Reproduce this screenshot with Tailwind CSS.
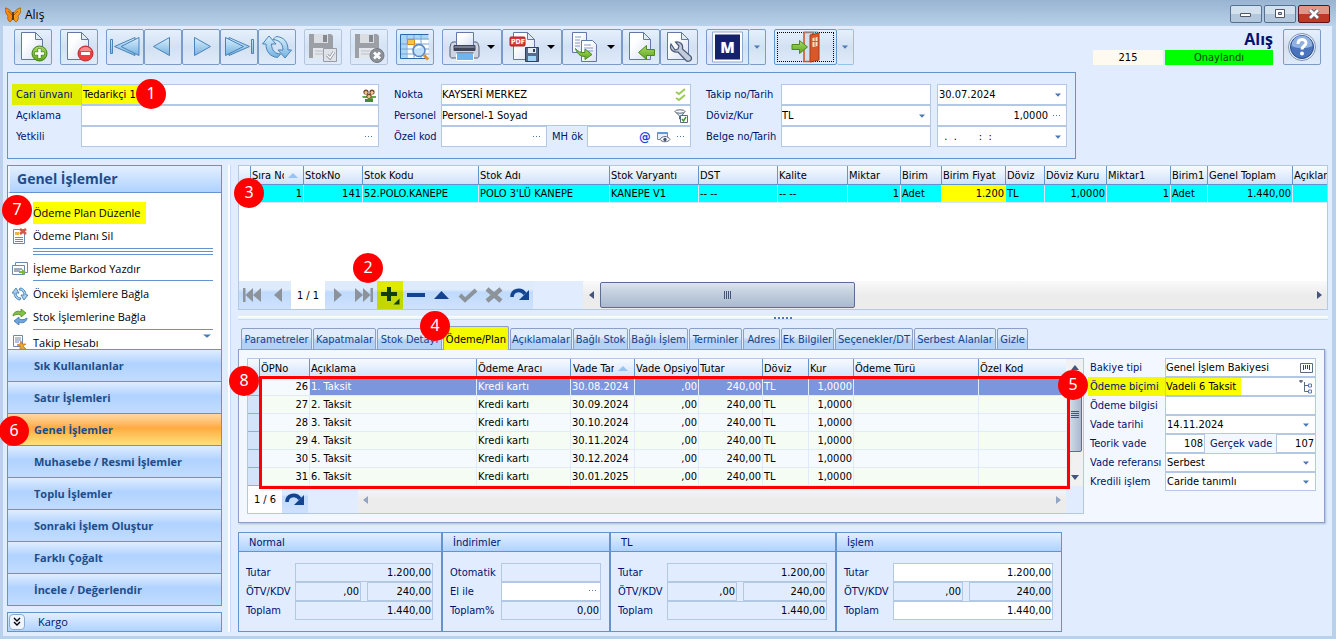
<!DOCTYPE html>
<html lang="tr">
<head>
    <meta charset="UTF-8">
    <meta name="viewport" content="width=device-width, initial-scale=1.0">
    <title>Alış</title>
    <script src="https://cdn.jsdelivr.net/npm/@tailwindcss/browser@4"></script>
</head>
<body class="relative min-h-screen flex flex-col bg-[#b9d1ea] font-['DejaVu_Sans_Condensed','Noto_Sans',sans-serif] text-[11px] leading-4 text-black">

    <!-- shared glyphs -->
    <svg class="absolute w-0 h-0">
        <defs>
            <linearGradient id="blue" x1="0" y1="0" x2="0" y2="1"><stop offset="0" stop-color="#d9effc"/><stop offset="1" stop-color="#74b2e0"/></linearGradient>
            <linearGradient id="green" x1="0" y1="0" x2="0" y2="1"><stop offset="0" stop-color="#a9dc62"/><stop offset="1" stop-color="#5da320"/></linearGradient>
            <linearGradient id="sheet" x1="0" y1="0" x2="1" y2="1"><stop offset=".3" stop-color="#fff"/><stop offset="1" stop-color="#d5def2"/></linearGradient>
        </defs>
        <symbol id="caret" viewBox="0 0 6 4"><path d="M0 0.5h6L3 3.8z" fill="#4a79b5"/></symbol>
        <symbol id="caret-black" viewBox="0 0 8 4"><path d="M0 0h8L4 4z" fill="#000"/></symbol>
        <symbol id="dots" viewBox="0 0 8 2"><path d="M0 0h1v1H0zM3 0h1v1H3zM6 0h1v1H6z" fill="#4a79b5"/></symbol>
        <symbol id="sort" viewBox="0 0 10 5"><path d="M0 5h10L5 0z" fill="#99c2f5"/></symbol>
        <symbol id="redo" viewBox="0 0 20 14"><path d="M2 9C2 2 11 0 15 6" fill="none" stroke="#13448f" stroke-width="3.6"/><path d="M19 2v10H9z" fill="#13448f"/></symbol>
        <symbol id="page" viewBox="0 0 32 32"><path d="M4.500 1.500h14l7 7v20h-21z" fill="url(#sheet)" stroke="#6478a8"/><path d="M18.500 1.500v7h7z" fill="#e3e9f6" stroke="#6478a8"/></symbol>
        <symbol id="disk" viewBox="0 0 32 32"><path d="M2 3h22l2 2v22H2z" fill="#8b8d91"/><path d="M7 3h14v9H7z" fill="#d9dbdd"/><path d="M16 4h4v7h-4z" fill="#6e7074"/><path d="M6 17h17v10H6z" fill="#e4e6e8"/><path d="M8 20h13M8 23h13" stroke="#b3b5b9"/></symbol>
    </svg>

    <header class="h-[26px] flex items-center pl-[5px] pr-1.5 bg-linear-to-b from-[#99b4d1] to-[#b9d1ea]">
        <svg class="w-4 h-4 mt-1" viewBox="0 0 16 16">
            <path d="M8 8C6 3 3 1 0 1c0 4 1 6 3 8-1 2 0 5 2 6 2-1 3-4 3-7z" fill="#f08a10" stroke="#8a4508" stroke-width=".6"/>
            <path d="M8 8c2-5 5-7 8-7 0 4-1 6-3 8 1 2 0 5-2 6-2-1-3-4-3-7z" fill="#f59a1c" stroke="#8a4508" stroke-width=".6"/>
            <path d="M3 4l4 4M13 4L9 8" stroke="#b35f0c"/>
            <path d="M8 5v8" stroke="#3c1d05" stroke-width="1.400"/>
        </svg>
        <h1 class="ml-1 mt-1 font-['Open_Sans',sans-serif] text-xs">Alış</h1>
        <div class="ml-auto flex gap-0.5 mt-0.5">
            <button aria-label="Küçült" class="w-8 h-[18px] flex items-center justify-center rounded-xs border border-[#56708f] bg-linear-to-b from-[#d3e0ee] from-50% to-[#b3c7dd] to-50%">
                <svg class="w-3 h-2" viewBox="0 0 12 8"><path d="M.5 3.500h10v3H.5z" fill="#fff" stroke="#535666"/></svg>
            </button>
            <button aria-label="Büyüt" class="w-8 h-[18px] flex items-center justify-center rounded-xs border border-[#56708f] bg-linear-to-b from-[#d3e0ee] from-50% to-[#b3c7dd] to-50%">
                <svg class="w-3 h-2.5" viewBox="0 0 12 10"><path d="M1.500.5h9v8h-9z" fill="#fff" stroke="#535666"/><path d="M4.500 3.500h3v2h-3z" fill="#b3c7dd" stroke="#535666"/></svg>
            </button>
            <button aria-label="Kapat" class="w-8 h-[18px] flex items-center justify-center rounded-xs border border-[#5c1520] bg-linear-to-b from-[#e0978a] from-50% to-[#bf3a26] to-50%">
                <svg class="w-3 h-2.5" viewBox="0 0 12 10"><path d="M2 1l8 8M10 1L2 9" stroke="#535666" stroke-width="4.500"/><path d="M2 1l8 8M10 1L2 9" stroke="#fff" stroke-width="2.800"/></svg>
            </button>
        </div>
    </header>

    <div class="grow mx-[3px] mb-[3px] mr-1 flex flex-col bg-[#e1edff] pb-1">

        <!-- toolbar -->
        <div class="flex pt-[3px] px-[11px] [&_button]:h-9 [&_button]:flex [&_button]:items-center [&_button]:justify-center [&_button]:border [&_button]:border-[#7a9cc6] [&_button]:rounded-xs [&_button]:bg-linear-to-b [&_button]:from-[#e6f0fc] [&_button]:via-[#d2e1f3] [&_button]:to-[#dfebf9] [&_button>svg]:h-8">
            <button aria-label="Yeni" class="w-[38px]">
                <svg class="w-8" viewBox="0 0 32 32"><use href="#page"/><circle cx="22.500" cy="22.500" r="7.500" fill="url(#green)" stroke="#3f7f16"/><path d="M22.500 17.500v10M17.500 22.500h10" stroke="#4d8a1c" stroke-width="4"/><path d="M22.500 18v9M18 22.500h9" stroke="#fff" stroke-width="2.600"/></svg>
            </button>
            <button aria-label="Sil" class="w-[38px] ml-2">
                <svg class="w-8" viewBox="0 0 32 32"><use href="#page"/><circle cx="22.500" cy="22.500" r="7.500" fill="#f03e3e" stroke="#b92c2c"/><path d="M16.500 20a6.500 6.500 0 0112 0z" fill="#fa8d8d"/><path d="M18 22.500h9" stroke="#fff" stroke-width="3"/></svg>
            </button>
            <div class="flex ml-2 [&_path]:fill-[url(#blue)] [&_path]:stroke-[#4a83b8]">
                <button aria-label="İlk" class="w-[38px]"><svg class="w-8" viewBox="0 0 32 32"><path d="M1.500 8.500h2v14h-2zM26 6.500v18L5.500 15.500z"/><path d="M30 6.500v18L12 15.500z"/></svg></button>
                <button aria-label="Önceki" class="w-[38px]"><svg class="w-8" viewBox="0 0 32 32"><path d="M22.500 6.500v18L6.500 15.500z"/></svg></button>
                <button aria-label="Sonraki" class="w-[38px]"><svg class="w-8" viewBox="0 0 32 32"><path d="M9.500 6.500v18l16-9z"/></svg></button>
                <button aria-label="Son" class="w-[38px]"><svg class="w-8" viewBox="0 0 32 32"><path d="M6 6.500v18l20.500-9zM28.500 8.500h2v14h-2z"/><path d="M2.500 6.500v18l18-9z"/></svg></button>
                <button aria-label="Yenile" class="w-[38px]"><svg class="w-8" viewBox="0 0 32 32"><path d="M8 5l-6.500 8H5c0 8 4 12.500 11.500 13.500l3-3.500c-5 0-9-3.500-9-10H15z"/><path d="M24 27l6.500-8H27c0-8-4-13-12-13.500L12 8.500c6 .5 10 4 10 10.500h-5z"/></svg></button>
            </div>
            <button aria-label="Kaydet" class="w-[38px] ml-2 opacity-80 border-[#a9bcd6]!">
                <svg class="w-8" viewBox="0 0 32 32"><use href="#disk"/><path d="M16.500 17.500h13v13h-13z" fill="#dfe1e4" stroke="#85878c"/><path d="M20 24l3 3 4-6" fill="none" stroke="#77797d" stroke-width="3"/><path d="M20 24l3 3 4-6" fill="none" stroke="#fff" stroke-width="1.400"/></svg>
            </button>
            <button aria-label="Kaydet ve kapat" class="w-[38px] ml-2 opacity-80 border-[#a9bcd6]!">
                <svg class="w-8" viewBox="0 0 32 32"><use href="#disk"/><circle cx="24" cy="24.500" r="7" fill="#77797d" stroke="#5e6064"/><path d="M21 21.500l6 6M27 21.500l-6 6" stroke="#fff" stroke-width="2.800"/></svg>
            </button>
            <button aria-label="Listele" class="w-[38px] ml-2">
                <svg class="w-8" viewBox="0 0 32 32"><path d="M1.500 3.500h28v24h-28z" fill="#fff"/><path d="M1.500 3.500h28v5h-22v19h-6z" fill="#a8d7f5"/><path d="M8 8h22M8 13h22M8 18h22M8 23h22M8 3v25M15 3v25M22 3v25M2 13h6M2 18h6M2 23h6" stroke="#7aa5d3"/><path d="M29.500 3.500h-28v24h28" fill="none" stroke="#2e66a8"/><path d="M8.500 8.500h7v5h-7z" fill="#fcc34c" stroke="#d98b12"/><path d="M25 24l4 4.500" stroke="#d9923a" stroke-width="3"/><circle cx="20" cy="19.500" r="6" fill="#bfe0f8" stroke="#5a86c2" stroke-width="1.600"/><path d="M16 18a4.500 4.500 0 017-2z" fill="#fff"/></svg>
            </button>

            <button aria-label="Yazdır" class="w-[60px] gap-1.5 ml-2">
                <svg class="w-8" viewBox="0 0 32 32"><path d="M4 11h23c2 0 2 2 3 5v9c0 1-1 2-2 2H3c-1 0-2-1-2-2v-9c1-3 1-5 3-5z" fill="#cfd4e2" stroke="#565e76"/><path d="M7.500 1.500h17v13h-17z" fill="url(#sheet)" stroke="#6478a8"/><path d="M5 14.500h21v5H5z" fill="#767d90" stroke="#3e4456"/><path d="M5 17h21v3H5z" fill="#3e4456"/><path d="M7.500 22.500h17v7h-17z" fill="#6fb4ee" stroke="#fff"/><path d="M7.500 22h17" stroke="#3e4456"/></svg>
                <svg class="w-2 h-1!" viewBox="0 0 8 4"><use href="#caret-black"/></svg>
            </button>
            <button aria-label="PDF kaydet" class="w-[60px] gap-1.5">
                <svg class="w-8" viewBox="0 0 32 32"><use href="#page"/><rect x="1" y="6" width="15" height="9" rx="1" fill="#d83a3a" stroke="#b01f1f"/><text x="2" y="13" font-size="7" font-weight="bold" fill="#fff" font-family="DejaVu Sans Condensed">PDF</text><path d="M16.500 16.500h13v14h-13z" fill="#566a8e" stroke="#2f3f5e"/><path d="M19 17h8v5h-8z" fill="#e6ecf5"/><path d="M24 18h2v3h-2z" fill="#2f3f5e"/><path d="M19 25h8v5h-8z" fill="#9fd3f7"/></svg>
                <svg class="w-2 h-1!" viewBox="0 0 8 4"><use href="#caret-black"/></svg>
            </button>
            <button aria-label="Kopyala" class="w-[60px] gap-1.5">
                <svg class="w-8" viewBox="0 0 32 32"><path d="M3.500 1.500h14v20h-14z" fill="url(#sheet)" stroke="#6478a8"/><path d="M6 6h6M6 9h5M6 12h5M6 15h5" stroke="#7f9ac9"/><path d="M12.500 9.500h11l4 4v17h-15z" fill="url(#sheet)" stroke="#6478a8"/><path d="M15 14h7M15 17h9M15 20h9" stroke="#7f9ac9"/><path d="M6.500 17.500c2 3 5 4.500 9.500 4v-3.500l7 5.500-7 5v-3c-5 0-8-3-9.500-8z" fill="url(#green)" stroke="#4d8a1c"/></svg>
                <svg class="w-2 h-1!" viewBox="0 0 8 4"><use href="#caret-black"/></svg>
            </button>
            <button aria-label="İçe al" class="w-[38px]">
                <svg class="w-8" viewBox="0 0 32 32"><use href="#page"/><path d="M13.500 21.500l8-7v4h8v6h-8v4z" fill="url(#green)" stroke="#4d8a1c"/></svg>
            </button>
            <button aria-label="Ayarlar" class="w-[38px]">
                <svg class="w-8" viewBox="0 0 32 32"><use href="#page"/><path d="M8 13c-2 5 2 9 7 8l8 8.500c2 2 7 0 5-4L19.500 18c1-5-3-8-7-7l3.500 4-1 3-3 1z" fill="#c3ccdc" stroke="#4a5a78" stroke-width="1.200"/></svg>
            </button>
            <button aria-label="Modül" class="w-[43px] ml-2 rounded-r-none!">
                <svg class="w-[31px]" viewBox="0 0 31 31"><path d="M.5.5h30v30H.5z" fill="#fff" stroke="#8fa9cd"/><path d="M3 3h25v25H3z" fill="#14216b"/><text x="15.500" y="21" text-anchor="middle" font-size="15" font-weight="800" fill="#fff" font-family="Open Sans">M</text></svg>
            </button>
            <button aria-label="Modül seç" class="w-[17px] border-l-0!"><svg class="w-1.5 h-1!" viewBox="0 0 6 4"><use href="#caret"/></svg></button>
            <button aria-label="Çıkış" class="w-[63px] ml-2 p-0.5 border-[#5f96cf]!">
                <span class="w-full h-full flex items-center justify-center border border-dotted border-black">
                    <svg class="w-9 h-8" viewBox="0 0 36 32"><path d="M16 1.500h9v29h-9z" fill="#cfe0f3" stroke="#d4562a" stroke-width="1.600"/><path d="M16 1h14" stroke="#4ab0e0"/><path d="M22 4l9-2v27l-9 2z" fill="#d9582a" stroke="#a83c14"/><path d="M24.500 7l5-1v9l-5 1z" fill="#fbe6c8"/><path d="M27 6v9M24 10.500h6" stroke="#c2602f"/><path d="M4 13.500h7.500V9.500l8 6.500-8 6.500v-4H4z" fill="url(#green)" stroke="#4d8a1c"/></svg>
                </span>
            </button>
            <button aria-label="Çıkış seç" class="w-[17px] border-l-0! border-[#8fc4ee]!"><svg class="w-1.5 h-1!" viewBox="0 0 6 4"><use href="#caret"/></svg></button>

            <div class="ml-auto w-[180px]">
                <h2 class="h-[21px] leading-[21px] text-right text-base font-bold font-['Open_Sans',sans-serif] text-[#001273]">Alış</h2>
                <div class="flex gap-0.5 h-[15px] leading-4 text-center">
                    <output class="w-[70px] bg-[#fffaf0]">215</output>
                    <output class="flex-1 bg-[#00ff00] text-[#003c00]">Onaylandı</output>
                </div>
            </div>
            <button aria-label="Yardım" class="w-[38px] ml-2.5">
                <svg class="w-8" viewBox="0 0 32 32"><circle cx="16" cy="16" r="13.500" fill="#e9f0fa" stroke="#8093b5"/><circle cx="16" cy="16" r="11.500" fill="#4a75bd" stroke="#264a8c"/><path d="M5.500 15a10.500 10.500 0 0121 0c-7 3-14 3-21 0z" fill="#8fb0e0"/><path d="M12 13c0-6 8-5.500 8-1 0 3-4 3-4 6.500" fill="none" stroke="#fff" stroke-width="3"/><circle cx="16" cy="22.500" r="2" fill="#fff"/></svg>
            </button>
        </div>

        <!-- document header form -->
        <form class="self-start mx-1 mt-[7px] flex border border-[#6593cf] pl-1 pr-2 py-[11px] text-[#00136e] [&_label]:h-[21px] [&_label]:leading-[21px] [&_label]:whitespace-nowrap [&_input]:min-w-0 [&_input]:outline-none [&_input]:text-black [&_select]:text-black [&_.f]:h-[21px] [&_.f]:flex [&_.f]:items-center [&_.f]:border [&_.f]:border-[#b3c8e4] [&_.f]:bg-white [&_.f]:pr-[5px]">
            <div class="grid grid-cols-[69px_298px]">
                <label for="cari" class="pl-1 bg-[#e2ee00]">Cari ünvanı</label>
                <div class="f">
                    <input id="cari" value="Tedarikçi 1" class="w-[60px] h-full pl-px bg-[#ffff00]">
                    <svg class="ml-auto -mr-1 w-4 h-4" viewBox="0 0 16 16"><path d="M2 11h5l1 3h3l1-3h3V9H1z" fill="#5faa4a"/><path d="M4 15h8v-3H4z" fill="#3c8f36"/><circle cx="5" cy="5" r="2.600" fill="#7a4a26"/><circle cx="11" cy="5" r="2.600" fill="#7a4a26"/><circle cx="8" cy="9" r="2.600" fill="#7a4a26"/><circle cx="5" cy="5.500" r="1.500" fill="#f2c79b"/><circle cx="11" cy="5.500" r="1.500" fill="#f2c79b"/><circle cx="8" cy="9.500" r="1.600" fill="#f2c79b"/></svg>
                </div>
                <label for="aciklama" class="pl-1">Açıklama</label>
                <div class="f"><input id="aciklama" class="flex-1"></div>
                <label for="yetkili" class="pl-1">Yetkili</label>
                <div class="f"><input id="yetkili" class="flex-1"><svg class="w-2 h-0.5"><use href="#dots"/></svg></div>
            </div>
            <div class="grid grid-cols-[47px_250px] ml-[15px]">
                <label for="nokta">Nokta</label>
                <div class="f">
                    <input id="nokta" value="KAYSERİ MERKEZ" class="flex-1">
                    <svg class="w-3 h-3.5 -mr-0.5" viewBox="0 0 12 14"><path d="M1 4l3 2 6-5M1 10l3 2 6-5" fill="none" stroke="#9ccb5a" stroke-width="2"/></svg>
                </div>
                <label for="personel">Personel</label>
                <div class="f">
                    <input id="personel" value="Personel-1 Soyad" class="flex-1">
                    <svg class="w-3.5 h-3.5 -mr-[3px]" viewBox="0 0 14 14"><path d="M1 2.500h10L7.500 7v4l-2-1V7z" fill="#e6ebf2" stroke="#5c6a80"/><ellipse cx="6" cy="2.500" rx="5" ry="1.700" fill="#fff" stroke="#5c6a80"/><path d="M6.500 6.500h7v7h-7z" fill="#fff" stroke="#5c6a80"/><path d="M8 10l1.500 2L12 8" fill="none" stroke="#3a9b2d" stroke-width="1.500"/></svg>
                </div>
                <label for="ozelkod">Özel kod</label>
                <div class="flex">
                    <div class="f w-[106px]"><input id="ozelkod" class="flex-1"><svg class="w-2 h-0.5"><use href="#dots"/></svg></div>
                    <label for="mhok" class="w-10 pl-[5px]">MH ök</label>
                    <div class="f w-[104px]">
                        <input id="mhok" class="flex-1">
                        <span class="w-3 text-[13px] font-bold text-[#1f3fe0]">@</span>
                        <svg class="w-3.5 h-3 mx-1.5" viewBox="0 0 14 12"><path d="M.5 1.500h10v7H.5z" fill="#e8f1fb" stroke="#6d87ad"/><path d="M.5 1h10v2H.5z" fill="#5d9bdc"/><path d="M3 8.500c2-4 8-4 10 0-2 3-8 3-10 0z" fill="#fff" stroke="#5c6a80"/><circle cx="8" cy="8.500" r="1.700" fill="#49566b"/></svg>
                        <svg class="w-2 h-0.5"><use href="#dots"/></svg>
                    </div>
                </div>
            </div>
            <div class="grid grid-cols-[75px_150px_136px] ml-[15px]">
                <label for="takip">Takip no/Tarih</label>
                <div class="f"><input id="takip" class="flex-1"></div>
                <div class="f ml-1.5"><input aria-label="Takip tarihi" value="30.07.2024" class="flex-1 pl-px"><svg class="w-1.5 h-1"><use href="#caret"/></svg></div>
                <label for="doviz">Döviz/Kur</label>
                <div class="f"><select id="doviz" class="flex-1 appearance-none"><option>TL</option></select><svg class="w-1.5 h-1"><use href="#caret"/></svg></div>
                <div class="f ml-1.5"><input aria-label="Kur" value="1,0000" class="flex-1 text-right pr-[5px]"><svg class="w-2 h-0.5"><use href="#dots"/></svg></div>
                <label for="belge">Belge no/Tarih</label>
                <div class="f"><input id="belge" class="flex-1"></div>
                <div class="f ml-1.5"><input aria-label="Belge tarihi" value="  .  .       :  :" class="flex-1 whitespace-pre"><svg class="w-1.5 h-1"><use href="#caret"/></svg></div>
            </div>
        </form>

        <div class="grow flex mx-1 mt-1.5">

            <!-- sidebar -->
            <aside class="w-[215px] shrink-0 font-['Open_Sans',sans-serif] text-[11px]">
                <div class="border border-[#6593cf]">
                    <h2 class="h-[27px] leading-[26px] pl-[7px] border-b border-[#6593cf] border-l-2 border-l-[#f0f7ff] bg-linear-to-b from-[#e3efff] to-[#afd2ff] text-sm leading-[26px]! font-bold text-[#204d89]">Genel İşlemler</h2>
                    <div class="relative h-[156px] overflow-hidden bg-white pt-2 [&_a]:h-[23px] [&_a]:flex [&_a]:items-center [&_a]:gap-[5px] [&_a]:pl-1 [&_a]:leading-[23px] [&_hr]:ml-[25px] [&_hr]:mr-2 [&_hr]:border-[#6593cf] [&_svg]:w-4 [&_svg]:h-4">
                        <a href="#"><svg viewBox="0 0 16 16"></svg><span class="h-[22px] leading-[22px] bg-[#ffff00] pr-[5px]">Ödeme Plan Düzenle</span></a>
                        <a href="#"><svg viewBox="0 0 16 16"><path d="M1.500 1.500h11v14h-11z" fill="#fff" stroke="#6d87ad"/><path d="M3 4h4v3H3z" fill="#f3b23f"/><path d="M3 9.500h8M3 11.500h8M3 13.500h8" stroke="#6d87ad"/><path d="M8 1l6 5M14 1L8 6" stroke="#cf5a4f" stroke-width="2.600"/></svg>Ödeme Planı Sil</a>
                        <div class="h-2.5 pt-px flex flex-col gap-0.5"><hr><hr><hr></div>
                        <a href="#"><svg viewBox="0 0 16 16"><path d="M3.500 1.500h12v10h-12z" fill="#fff" stroke="#6d87ad"/><path d="M.5 4.500h12v9H.5z" fill="#fff" stroke="#6d87ad"/><path d="M3 7v4M5 7v4M7 7v4M9 7v2" stroke="#49566b"/><path d="M7 10h3V8l4 3-4 3v-2H7z" fill="#7cb83a"/></svg>İşleme Barkod Yazdır</a>
                        <div class="h-0.5"><hr></div>
                        <a href="#"><svg viewBox="0 0 16 16"><path d="M4 2L0 7h2c0 4 3 7 6 7l1-2c-3 0-5-2-5-5h3z" fill="#a5d0f0" stroke="#3a74ad" stroke-width=".8"/><path d="M12 14l4-5h-2c0-4-3-7-6-7L7 4c3 0 5 2 5 5H9z" fill="#a5d0f0" stroke="#3a74ad" stroke-width=".8"/></svg>Önceki İşlemlere Bağla</a>
                        <a href="#"><svg viewBox="0 0 16 16"><path d="M1 7c0-4 5-6 8-4V0l5 4-5 4V6C6 5 4 5 1 7z" fill="#86bf4b" stroke="#4d8a1c" stroke-width=".8"/><path d="M15 9c0 4-5 6-8 4v3l-5-4 5-4v2c3 1 5 1 8-1z" fill="#6fa5dc" stroke="#3a74ad" stroke-width=".8"/></svg>Stok İşlemlerine Bağla</a>
                        <div class="h-[3px] pt-px"><hr></div>
                        <a href="#"><svg viewBox="0 0 16 16"><path d="M1.500.5h9v11h-9z" fill="#fff" stroke="#6d87ad"/><path d="M3 3h6M3 5h6M3 7h4" stroke="#6d87ad"/><path d="M9 6l1 3 4 0-3 2 4 4-5-2-2 2 0-4-3-1 3-1z" fill="#f3a52a" stroke="#a86810" stroke-width=".6"/></svg>Takip Hesabı</a>
                        <button aria-label="Aşağı kaydır" class="absolute right-2.5 bottom-[11px] w-2 h-1 flex"><svg class="w-2! h-1!" viewBox="0 0 6 4" preserveAspectRatio="none"><use href="#caret"/></svg></button>
                    </div>
                    <nav class="font-bold text-[#204d89] [&_button]:block [&_button]:w-full [&_button]:h-8 [&_button]:pt-px [&_button]:pl-[26px] [&_button]:text-left [&_button]:border-t [&_button]:border-[#6593cf] [&_button]:bg-linear-to-b">
                        <button class="from-[#e0edff] from-0% via-[#b0d2ff] via-45% to-[#c2dcff]">Sık Kullanılanlar</button>
                        <button class="from-[#e0edff] from-0% via-[#b0d2ff] via-45% to-[#c2dcff]">Satır İşlemleri</button>
                        <button class="from-[#ffd9a3] from-0% via-[#ffab3f] via-45% to-[#fee17b]">Genel İşlemler</button>
                        <button class="from-[#e0edff] from-0% via-[#b0d2ff] via-45% to-[#c2dcff]">Muhasebe / Resmi İşlemler</button>
                        <button class="from-[#e0edff] from-0% via-[#b0d2ff] via-45% to-[#c2dcff]">Toplu İşlemler</button>
                        <button class="from-[#e0edff] from-0% via-[#b0d2ff] via-45% to-[#c2dcff]">Sonraki İşlem Oluştur</button>
                        <button class="from-[#e0edff] from-0% via-[#b0d2ff] via-45% to-[#c2dcff]">Farklı Çoğalt</button>
                        <button class="from-[#e0edff] from-0% via-[#b0d2ff] via-45% to-[#c2dcff]">İncele / Değerlendir</button>
                    </nav>
                </div>
                <button class="w-full h-5 mt-1.5 pl-px flex items-center border border-[#6593cf] bg-linear-to-b from-[#e3efff] to-[#afd2ff] text-[#00136e]">
                    <span class="w-4 h-4 flex items-center justify-center rounded-sm border border-[#8fa9cd] bg-[#eef5ff]"><svg class="w-2 h-2.5" viewBox="0 0 8 10"><path d="M1 1l3 3 3-3M1 5l3 3 3-3" fill="none" stroke="#000" stroke-width="1.400"/></svg></span>
                    <span class="ml-[13px]">Kargo</span>
                </button>
            </aside>

            <div class="w-4 shrink-0 pl-1.5 pr-[7px]">
                <div class="h-full flex items-center border-l-2 border-r border-l-white border-r-[#c3dbff]"><svg class="w-1 h-1.5" viewBox="0 0 4 6"><path d="M4 0v6L0 3z" fill="#4a79b5"/></svg></div>
            </div>

            <main class="flex-1 min-w-0">

                <!-- stock lines -->
                <section class="border border-[#b3c8e4] bg-white">
                    <table class="w-full table-fixed border-separate border-spacing-0 whitespace-nowrap [&_th]:h-[19px] [&_th]:p-0 [&_th]:pl-px [&_th]:pt-px [&_th]:overflow-hidden [&_th]:text-left [&_th]:font-normal [&_th]:border-r [&_th]:border-b [&_th]:border-[#6593cf] [&_th]:bg-linear-to-b [&_th]:from-[#f8fbff] [&_th]:to-[#d0e2fb] [&_td]:h-[18px] [&_td]:p-0 [&_td]:px-px [&_td]:pt-px [&_td]:overflow-hidden [&_td]:border-r [&_td]:border-b [&_td]:border-[#d7e6fb] [&_td]:bg-[#00ffff] [&_th:last-child]:border-r-0 [&_td:last-child]:border-r-0">
                        <colgroup>
                            <col class="w-3"><col class="w-[53px]"><col class="w-[59px]"><col class="w-[116px]"><col class="w-[131px]"><col class="w-[89px]"><col class="w-[79px]"><col class="w-[70px]"><col class="w-[53px]"><col class="w-[41px]"><col class="w-[64px]"><col class="w-[39px]"><col class="w-[62px]"><col class="w-[64px]"><col class="w-[37px]"><col class="w-[85px]"><col>
                        </colgroup>
                        <thead>
                            <tr>
                                <th></th>
                                <th><div class="flex items-center"><span class="w-8 overflow-hidden">Sıra No</span><svg class="w-2.5 h-[5px] ml-1 shrink-0"><use href="#sort"/></svg></div></th>
                                <th>StokNo</th><th>Stok Kodu</th><th>Stok Adı</th><th>Stok Varyantı</th><th>DST</th><th>Kalite</th><th>Miktar</th><th>Birim</th><th>Birim Fiyat</th><th>Döviz</th><th>Döviz Kuru</th><th>Miktar1</th><th>Birim1</th><th>Genel Toplam</th><th>Açıklama</th>
                            </tr>
                        </thead>
                        <tbody>
                            <tr>
                                <td></td><td class="text-right">1</td><td class="text-right">141</td><td>52.POLO.KANEPE</td><td>POLO 3'LÜ KANEPE</td><td>KANEPE V1</td><td>-- --</td><td>-- --</td><td class="text-right">1</td><td>Adet</td><td class="text-right bg-[#ffff00]!">1.200</td><td>TL</td><td class="text-right">1,0000</td><td class="text-right">1</td><td>Adet</td><td class="text-right">1.440,00</td><td></td>
                            </tr>
                        </tbody>
                    </table>
                    <div class="mt-[78px] h-7 flex bg-[#e1edff] [&_button]:flex [&_button]:items-center [&_button]:justify-center">
                        <div class="flex bg-linear-to-b from-[#deebfd] from-30% via-[#bfdafc] via-40% to-[#cfe2fc] [&>button]:w-[26px]">
                            <button aria-label="İlk kayıt"><svg class="w-5 h-4" viewBox="0 0 20 16"><path d="M1 1h2.500v14H1zM11 1v14L3.500 8zM19 1v14l-8-7z" fill="#8d939b"/></svg></button>
                            <button aria-label="Önceki kayıt"><svg class="w-2 h-4" viewBox="0 0 8 16"><path d="M8 1v14L0 8z" fill="#8d939b"/></svg></button>
                            <span class="w-[34px] text-center leading-[29px] bg-white">1 / 1</span>
                            <button aria-label="Sonraki kayıt"><svg class="w-2 h-4" viewBox="0 0 8 16"><path d="M0 1v14l8-7z" fill="#8d939b"/></svg></button>
                            <button aria-label="Son kayıt"><svg class="w-5 h-4" viewBox="0 0 20 16"><path d="M16.500 1H19v14h-2.500zM9 1v14l7.500-7zM1 1v14l8-7z" fill="#8d939b"/></svg></button>
                            <button aria-label="Ekle" class="bg-linear-to-b from-[#dfea00] from-30% to-[#c3d800] to-40%"><svg class="w-5 h-5" viewBox="0 0 20 20"><path d="M9 2v14M1 9h16" stroke="#123d10" stroke-width="4"/><path d="M19.500 13.500v6h-6z" fill="#123d10"/></svg></button>
                            <button aria-label="Çıkar"><svg class="w-5 h-1"><path d="M1 2h18" stroke="#13448f" stroke-width="4"/></svg></button>
                            <button aria-label="Düzenle"><svg class="w-4 h-2" viewBox="0 0 16 8"><path d="M0 8h15L7.500 0z" fill="#13448f"/></svg></button>
                            <button aria-label="Onayla"><svg class="w-5 h-4" viewBox="0 0 20 16"><path d="M2 8l5 5L18 3" fill="none" stroke="#8d939b" stroke-width="4"/></svg></button>
                            <button aria-label="Vazgeç"><svg class="w-5 h-4" viewBox="0 0 20 16"><path d="M3 2l14 12M17 2L3 14" stroke="#8d939b" stroke-width="4.500"/></svg></button>
                            <button aria-label="Yenile"><svg class="w-5 h-3.5"><use href="#redo"/></svg></button>
                        </div>
                        <div class="flex-1 ml-[50px] flex items-center bg-linear-to-b from-[#fafafa] to-[#ececec] to-50%">
                            <button aria-label="Sola kaydır" class="w-[17px]"><svg class="w-[5px] h-2" viewBox="0 0 5 8"><path d="M5 0v8L0 4z" fill="#44557c"/></svg></button>
                            <div class="w-[255px] h-[26px] flex items-center justify-center gap-px rounded-xs border border-[#5a6e95] bg-linear-to-b from-[#dde5ee] via-[#c9d4e2] via-30% to-[#a9b9cf] [&>i]:w-px [&>i]:h-2 [&>i]:bg-[#44557c]"><i></i><i></i><i></i><i></i></div>
                            <button aria-label="Sağa kaydır" class="ml-auto mr-1 w-2"><svg class="w-[5px] h-2" viewBox="0 0 5 8"><path d="M0 0v8l5-4z" fill="#44557c"/></svg></button>
                        </div>
                    </div>
                </section>

                <div class="h-4 pt-1.5">
                    <div class="h-1 border-t border-b border-t-white border-b-[#c3dbff] bg-[#f0f6ff] flex justify-center"><svg class="w-[18px] h-0.5" viewBox="0 0 18 2"><path d="M0 1h18" stroke="#4a79b5" stroke-width="2" stroke-dasharray="2 2"/></svg></div>
                </div>

                <!-- detail tabs -->
                <div role="tablist" class="h-6 flex items-end gap-px pl-[3px] [&_button]:h-[22px] [&_button]:pt-0.5 [&_button]:shrink-0 [&_button]:whitespace-nowrap [&_button]:rounded-t-xs [&_button]:border [&_button]:border-[#8ba0c4] [&_button]:text-center [&_button]:text-[#15428b] [&_button]:bg-linear-to-b [&_button]:from-[#e0ecfc] [&_button]:from-40% [&_button]:to-[#b3d0f5] [&_button]:to-60%">
                    <button role="tab" class="w-[71px]">Parametreler</button>
                    <button role="tab" class="w-[63px]">Kapatmalar</button>
                    <button role="tab" class="w-[65px]">Stok Detayı</button>
                    <button role="tab" aria-selected="true" class="w-[66px] h-6! border-b-0! bg-none! bg-[#f4fa00] text-black!">Ödeme/Plan</button>
                    <button role="tab" class="w-[62px]">Açıklamalar</button>
                    <button role="tab" class="w-[55px]">Bağlı Stok</button>
                    <button role="tab" class="w-[59px]">Bağlı İşlem</button>
                    <button role="tab" class="w-[53px]">Terminler</button>
                    <button role="tab" class="w-[37px]">Adres</button>
                    <button role="tab" class="w-[53px]">Ek Bilgiler</button>
                    <button role="tab" class="w-[78px]">Seçenekler/DT</button>
                    <button role="tab" class="w-[82px]">Serbest Alanlar</button>
                    <button role="tab" class="w-[31px]">Gizle</button>
                </div>
                <section class="-mt-px mr-[3px] flex gap-1.5 p-2 bg-[#f3f7ff] border border-[#8ba0c4] shadow-[1px_1px_2px_#a9bad6]">
                    <div class="relative flex-1 min-w-0 border border-[#b3c8e4] bg-[#e1edff]">
                        <div class="flex">
                            <table class="flex-1 min-w-0 w-0 table-fixed border-separate border-spacing-0 whitespace-nowrap [&_th]:h-[19px] [&_th]:p-0 [&_th]:pl-px [&_th]:pt-px [&_th]:overflow-hidden [&_th]:text-left [&_th]:font-normal [&_th]:border-r [&_th]:border-b [&_th]:border-[#6593cf] [&_th]:bg-linear-to-b [&_th]:from-[#f8fbff] [&_th]:to-[#d0e2fb] [&_td]:h-[18px] [&_td]:p-0 [&_td]:px-px [&_td]:pt-px [&_td]:overflow-hidden [&_td]:border-r [&_td]:border-b [&_td]:border-[#e1ebfb] [&_th:last-child]:border-r-0 [&_td:last-child]:border-r-0 [&_td:first-child]:bg-[#d3e3fa] [&_td:first-child]:border-[#8fb0de] [&_.n]:text-right">
                                <colgroup>
                                    <col class="w-3"><col class="w-[50px]"><col class="w-[167px]"><col class="w-[94px]"><col class="w-[64px]"><col class="w-[64px]"><col class="w-[64px]"><col class="w-[46px]"><col class="w-[45px]"><col class="w-[125px]"><col>
                                </colgroup>
                                <thead>
                                    <tr>
                                        <th></th><th>ÖPNo</th><th>Açıklama</th><th>Ödeme Aracı</th>
                                        <th><div class="flex items-center"><span class="w-[42px] pl-px overflow-hidden">Vade Tarihi</span><svg class="w-2.5 h-[5px] ml-1 shrink-0"><use href="#sort"/></svg></div></th>
                                        <th><div class="overflow-hidden">Vade Opsiyon</div></th><th>Tutar</th><th>Döviz</th><th>Kur</th><th>Ödeme Türü</th><th>Özel Kod</th>
                                    </tr>
                                </thead>
                                <tbody>
                                    <tr class="bg-[#7b96dd] text-white"><td></td><td class="n bg-[#f5faff] text-black">26</td><td>1. Taksit</td><td>Kredi kartı</td><td>30.08.2024</td><td class="n">,00</td><td class="n">240,00</td><td>TL</td><td class="n">1,0000</td><td></td><td></td></tr>
                                    <tr class="bg-[#f5fcf3]"><td></td><td class="n">27</td><td>2. Taksit</td><td>Kredi kartı</td><td>30.09.2024</td><td class="n">,00</td><td class="n">240,00</td><td>TL</td><td class="n">1,0000</td><td></td><td></td></tr>
                                    <tr class="bg-[#f5faff]"><td></td><td class="n">28</td><td>3. Taksit</td><td>Kredi kartı</td><td>30.10.2024</td><td class="n">,00</td><td class="n">240,00</td><td>TL</td><td class="n">1,0000</td><td></td><td></td></tr>
                                    <tr class="bg-[#f5fcf3]"><td></td><td class="n">29</td><td>4. Taksit</td><td>Kredi kartı</td><td>30.11.2024</td><td class="n">,00</td><td class="n">240,00</td><td>TL</td><td class="n">1,0000</td><td></td><td></td></tr>
                                    <tr class="bg-[#f5faff]"><td></td><td class="n">30</td><td>5. Taksit</td><td>Kredi kartı</td><td>30.12.2024</td><td class="n">,00</td><td class="n">240,00</td><td>TL</td><td class="n">1,0000</td><td></td><td></td></tr>
                                    <tr class="bg-[#f5fcf3]"><td></td><td class="n">31</td><td>6. Taksit</td><td>Kredi kartı</td><td>30.01.2025</td><td class="n">,00</td><td class="n">240,00</td><td>TL</td><td class="n">1,0000</td><td></td><td></td></tr>
                                </tbody>
                            </table>
                            <div class="w-[17px] flex flex-col items-center py-1.5 bg-[#f1f1f1]">
                                <svg class="w-2 h-[5px]" viewBox="0 0 8 5"><path d="M0 5h8L4 0z" fill="#44557c"/></svg>
                                <div class="w-[15px] h-[75px] mt-[7px] flex flex-col items-center justify-center gap-px rounded-xs border border-[#5a6e95] bg-linear-to-r from-[#dde5ee] via-[#c9d4e2] via-30% to-[#a9b9cf] [&>i]:w-2 [&>i]:h-px [&>i]:bg-[#44557c]"><i></i><i></i><i></i><i></i></div>
                                <svg class="mt-auto w-2 h-[5px]" viewBox="0 0 8 5"><path d="M0 0h8L4 5z" fill="#44557c"/></svg>
                            </div>
                        </div>
                        <div class="flex h-[27px] mr-[17px]">
                            <span class="w-[34px] text-center leading-[27px] bg-white">1 / 6</span>
                            <button aria-label="Yenile" class="w-[26px] flex justify-center items-center bg-linear-to-b from-[#deebfd] from-30% via-[#bfdafc] via-40% to-[#cfe2fc]"><svg class="w-5 h-3.5"><use href="#redo"/></svg></button>
                            <div class="flex-1 ml-[50px] px-[5px] flex items-center justify-between bg-linear-to-b from-[#f8f8f8] to-[#ececec] to-50%">
                                <svg class="w-[5px] h-2" viewBox="0 0 5 8"><path d="M5 0v8L0 4z" fill="#95a5c4"/></svg>
                                <svg class="w-[5px] h-2" viewBox="0 0 5 8"><path d="M0 0v8l5-4z" fill="#95a5c4"/></svg>
                            </div>
                        </div>
                        <div class="absolute left-[11px] right-[13px] top-[17px] h-[113px] border-3 border-[#ff0000]"></div>
                    </div>

                    <form class="w-[226px] shrink-0 grid grid-cols-[75px_1fr] content-start text-[#00136e] whitespace-nowrap [&_label]:h-[19px] [&_label]:leading-[19px] [&_input]:min-w-0 [&_input]:text-black [&_select]:text-black [&_input]:outline-none [&_.f]:h-[19px] [&_.f]:flex [&_.f]:items-center [&_.f]:border [&_.f]:border-[#b3c8e4] [&_.f]:bg-white [&_.f]:pr-1.5">
                        <label for="bakiye">Bakiye tipi</label>
                        <div class="f"><input id="bakiye" value="Genel İşlem Bakiyesi" class="flex-1"><svg class="w-[13px] h-3 -mr-1" viewBox="0 0 13 12"><path d="M.5 1.500h12v9H.5z" fill="#fff" stroke="#5c6a80"/><path d="M3.500 3v5M5.500 3v4M7.500 3v4M9.500 3v5" stroke="#39455a"/></svg></div>
                        <label for="bicim" class="-ml-0.5 pl-0.5 bg-[#f4fa00]">Ödeme biçimi</label>
                        <div class="f"><input id="bicim" value="Vadeli 6 Taksit" class="w-[75px] h-full bg-[#ffff00]"><svg class="w-3.5 h-3.5 ml-auto -mr-1" viewBox="0 0 14 14"><path d="M0 1h4M2 0v3" stroke="#39455a"/><path d="M5.500 2v9.500H9M5.500 5.500H9" fill="none" stroke="#5c6a80"/><path d="M9.500 4h3v3h-3zM9.500 10h3v3h-3z" fill="#fff" stroke="#5d7bb0"/></svg></div>
                        <label for="bilgi">Ödeme bilgisi</label>
                        <div class="f"><input id="bilgi" class="flex-1"></div>
                        <label for="vade">Vade tarihi</label>
                        <div class="f"><input id="vade" value="14.11.2024" class="flex-1 pl-px"><svg class="w-1.5 h-1"><use href="#caret"/></svg></div>
                        <label for="teorik">Teorik vade</label>
                        <div class="flex">
                            <div class="f w-10 pr-px!"><input id="teorik" value="108" class="w-full text-right"></div>
                            <label for="gercek" class="flex-1 pl-[5px]">Gerçek vade</label>
                            <div class="f w-10 pr-px!"><input id="gercek" value="107" class="w-full text-right"></div>
                        </div>
                        <label for="referans">Vade referansı</label>
                        <div class="f"><select id="referans" class="flex-1 pl-px appearance-none"><option>Serbest</option></select><svg class="w-1.5 h-1"><use href="#caret"/></svg></div>
                        <label for="kredili">Kredili işlem</label>
                        <div class="f"><select id="kredili" class="flex-1 pl-px appearance-none"><option>Caride tanımlı</option></select><svg class="w-1.5 h-1"><use href="#caret"/></svg></div>
                    </form>
                </section>

                <!-- totals -->
                <div class="mt-[9px] flex text-[#00136e] whitespace-nowrap [&_fieldset]:h-[100px] [&_fieldset]:border [&_fieldset]:border-[#6593cf] [&_h3]:h-[19px] [&_h3]:leading-[19px] [&_h3]:pl-2.5 [&_h3]:border-b [&_h3]:border-[#6593cf] [&_h3]:bg-linear-to-b [&_h3]:from-[#e3efff] [&_h3]:to-[#afd2ff] [&_label]:leading-[19px] [&_input]:min-w-0 [&_input]:w-full [&_input]:h-[19px] [&_input]:px-px [&_input]:border [&_input]:border-[#b3c8e4] [&_input]:text-right [&_input]:text-black [&_.g]:grid [&_.g]:pt-[11px] [&_.g]:pl-[7px] [&_.g]:pr-2">
                    <fieldset class="w-[204px]">
                        <h3>Normal</h3>
                        <div class="g grid-cols-[49px_1fr]">
                            <label for="n1">Tutar</label><input id="n1" value="1.200,00">
                            <label for="n2">ÖTV/KDV</label><div class="flex gap-1.5"><input id="n2" value=",00"><input aria-label="KDV" value="240,00"></div>
                            <label for="n3">Toplam</label><input id="n3" value="1.440,00">
                        </div>
                    </fieldset>
                    <fieldset class="w-[168px]">
                        <h3>İndirimler</h3>
                        <div class="g grid-cols-[51px_1fr]">
                            <label for="i1">Otomatik</label><input id="i1">
                            <label for="i2">El ile</label><div class="relative"><input id="i2" class="bg-white"><svg class="absolute right-1 top-2 w-2 h-0.5"><use href="#dots"/></svg></div>
                            <label for="i3">Toplam%</label><input id="i3" value="0,00">
                        </div>
                    </fieldset>
                    <fieldset class="w-[226px]">
                        <h3>TL</h3>
                        <div class="g grid-cols-[49px_1fr]">
                            <label for="t1">Tutar</label><input id="t1" value="1.200,00">
                            <label for="t2">ÖTV/KDV</label><div class="grid grid-cols-[70px_1fr] gap-1.5"><input id="t2" value=",00"><input aria-label="KDV" value="240,00"></div>
                            <label for="t3">Toplam</label><input id="t3" value="1.440,00">
                        </div>
                    </fieldset>
                    <fieldset class="w-[226px]">
                        <h3>İşlem</h3>
                        <div class="g grid-cols-[49px_1fr]">
                            <label for="s1">Tutar</label><input id="s1" value="1.200,00" class="bg-white">
                            <label for="s2">ÖTV/KDV</label><div class="grid grid-cols-[70px_1fr] gap-1.5"><input id="s2" value=",00"><input aria-label="KDV" value="240,00"></div>
                            <label for="s3">Toplam</label><input id="s3" value="1.440,00" class="bg-white">
                        </div>
                    </fieldset>
                </div>
            </main>
        </div>
    </div>

    <!-- step markers -->
    <div class="[&>span]:absolute [&>span]:w-[30px] [&>span]:h-[30px] [&>span]:rounded-full [&>span]:bg-[#ff0000] [&>span]:text-white [&>span]:text-base [&>span]:leading-[29px] [&>span]:text-center [&>span]:font-['Noto_Sans',sans-serif]">
        <span class="left-[136px] top-[79px]">1</span>
        <span class="left-[353px] top-[253px]">2</span>
        <span class="left-[234px] top-[178px]">3</span>
        <span class="left-[420px] top-[311px]">4</span>
        <span class="left-[1058px] top-[370px]">5</span>
        <span class="left-[-1px] top-[416px]">6</span>
        <span class="left-[2px] top-[195px]">7</span>
        <span class="left-[229px] top-[366px]">8</span>
    </div>
</body>
</html>
